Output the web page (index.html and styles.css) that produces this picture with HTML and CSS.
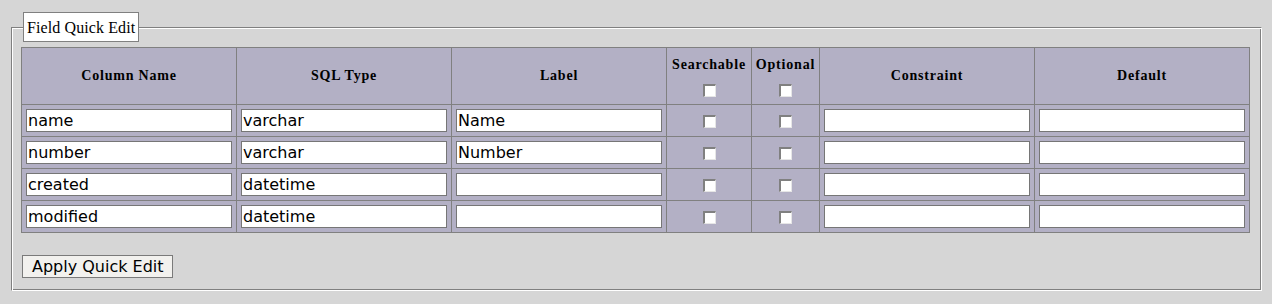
FILE: index.html
```html
<!DOCTYPE html>
<html>
<head>
    <title>Field Quick Edit</title>
    <link rel="stylesheet" href="styles.css">
</head>
<body>
    <form class="quick-form">
        <fieldset class="quick-edit">
            <legend>Field Quick Edit</legend>
            <table class="fields">
                <colgroup>
                    <col class="col-text">
                    <col class="col-text">
                    <col class="col-text">
                    <col class="col-search">
                    <col class="col-optional">
                    <col class="col-text">
                    <col class="col-text">
                </colgroup>
                <tr>
                    <th>Column Name</th>
                    <th>SQL Type</th>
                    <th>Label</th>
                    <th>Searchable<input type="checkbox" class="check check-head"></th>
                    <th>Optional<input type="checkbox" class="check check-head"></th>
                    <th>Constraint</th>
                    <th>Default</th>
                </tr>
                <tr>
                    <td><input type="text" class="field" value="name"></td>
                    <td><input type="text" class="field" value="varchar"></td>
                    <td><input type="text" class="field" value="Name"></td>
                    <td class="center"><input type="checkbox" class="check"></td>
                    <td class="center"><input type="checkbox" class="check"></td>
                    <td><input type="text" class="field" value=""></td>
                    <td><input type="text" class="field" value=""></td>
                </tr>
                <tr>
                    <td><input type="text" class="field" value="number"></td>
                    <td><input type="text" class="field" value="varchar"></td>
                    <td><input type="text" class="field" value="Number"></td>
                    <td class="center"><input type="checkbox" class="check"></td>
                    <td class="center"><input type="checkbox" class="check"></td>
                    <td><input type="text" class="field" value=""></td>
                    <td><input type="text" class="field" value=""></td>
                </tr>
                <tr>
                    <td><input type="text" class="field" value="created"></td>
                    <td><input type="text" class="field" value="datetime"></td>
                    <td><input type="text" class="field" value=""></td>
                    <td class="center"><input type="checkbox" class="check"></td>
                    <td class="center"><input type="checkbox" class="check"></td>
                    <td><input type="text" class="field" value=""></td>
                    <td><input type="text" class="field" value=""></td>
                </tr>
                <tr>
                    <td><input type="text" class="field" value="modified"></td>
                    <td><input type="text" class="field" value="datetime"></td>
                    <td><input type="text" class="field" value=""></td>
                    <td class="center"><input type="checkbox" class="check"></td>
                    <td class="center"><input type="checkbox" class="check"></td>
                    <td><input type="text" class="field" value=""></td>
                    <td><input type="text" class="field" value=""></td>
                </tr>
            </table>
            <div class="actions">
                <button type="button" class="apply">Apply Quick Edit</button>
            </div>
        </fieldset>
    </form>
</body>
</html>
```

FILE: styles.css
```css
body {
    margin: 0;
    background: #d6d6d6;
    font-family: "Liberation Serif", serif;
    color: #000;
}
.quick-form {
    margin: 0;
}
/* groove border: 1px outer line plus 1px inset shadow */
.quick-edit {
    margin: 12px 10px 13px 11px;
    padding: 5px 11px 12px 10px;
    border: 1px solid;
    border-color: #808080 #fff #fff #808080;
    box-shadow: inset 1px 1px 0 #fff, inset -1px -1px 0 #808080;
    min-width: 0;
}
.quick-edit legend {
    margin-left: 1px;
    padding: 6px 3px 4px;
    background: #fff;
    border: 1px solid #808080;
    font-size: 16px;
    line-height: 18px;
    letter-spacing: 0.1px;
}
.fields {
    border-collapse: collapse;
    table-layout: fixed;
    width: 1229px;
    margin-left: -1px;
    background: #b3b0c5;
    border: 1px solid #808080;
}
.col-text {
    width: 215px;
}
.col-search {
    width: 85px;
}
.col-optional {
    width: 68px;
}
.fields th,
.fields td {
    border: 1px solid #808080;
    padding: 4px;
}
.fields th {
    height: 48px;
    padding: 4px 0;
    font-size: 14px;
    line-height: 20px;
    font-weight: bold;
    letter-spacing: 0.8px;
    vertical-align: middle;
    text-align: center;
}
.center {
    text-align: center;
}
.field {
    display: block;
    box-sizing: border-box;
    width: 206px;
    height: 23px;
    margin: 0;
    padding: 1px 1px;
    border: 1px solid #767676;
    background: #fff;
    font-family: "DejaVu Sans", sans-serif;
    font-size: 16px;
    color: #000;
}
.check {
    -webkit-appearance: none;
    appearance: none;
    display: inline-block;
    box-sizing: border-box;
    width: 13px;
    height: 13px;
    margin: 0;
    vertical-align: middle;
    background: #fff;
    border-style: solid;
    border-width: 2px 1px 1px 2px;
    border-color: #808080 #e6e6e6 #e6e6e6 #808080;
}
.check-head {
    display: block;
    margin: 9px auto 0;
}
.actions {
    margin-top: 22px;
}
.apply {
    height: 23px;
    margin: 0;
    padding: 1px 8px 1px 9px;
    background: #f2f1ee;
    border: 1px solid #7a7a7a;
    border-radius: 0;
    font-family: "DejaVu Sans", sans-serif;
    font-size: 16px;
    line-height: 19px;
    color: #000;
}
```
